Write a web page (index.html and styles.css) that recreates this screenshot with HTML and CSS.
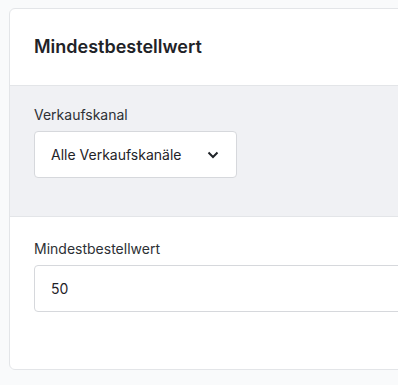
FILE: index.html
```html
<!DOCTYPE html>
<html lang="de">
<head>
  <meta charset="UTF-8">
  <meta name="viewport" content="width=device-width, initial-scale=1.0">
  <title>Mindestbestellwert</title>
  <link rel="stylesheet" href="styles.css">
</head>
<body>
  <div class="card">
    <div class="card-header">
      <h2>Mindestbestellwert</h2>
    </div>
    <div class="card-filter">
      <label for="channel">Verkaufskanal</label>
      <div class="select-box" id="channel">
        <span>Alle Verkaufskanäle</span>
        <svg width="12" height="8" viewBox="0 0 12 8"><path d="M1.5 1.5 L6 6 L10.5 1.5" fill="none" stroke="#1f2328" stroke-width="2"/></svg>
      </div>
    </div>
    <div class="card-body">
      <label for="minvalue">Mindestbestellwert</label>
      <input type="text" id="minvalue" value="50">
    </div>
  </div>
</body>
</html>
```

FILE: styles.css
```css
body {
  font-family: Inter, "Noto Sans", sans-serif;
  background-color: #f9fafb;
  margin: 0;
  padding: 8px 0 0 9px;
  overflow: hidden;
  color: #2d3035;
}
.card {
  width: 520px;
  background: white;
  border: 1px solid #e3e5e8;
  border-radius: 6px;
}
.card-header {
  padding: 26px 24px;
  border-bottom: 1px solid #e3e5e8;
}
.card-header h2 {
  margin: 0;
  font-size: 18px;
  line-height: 24px;
  font-weight: 600;
  color: #1f2328;
}
.card-filter {
  background: #f0f1f4;
  padding: 19px 24px 38px;
  border-bottom: 1px solid #e3e5e8;
}
label {
  display: block;
  font-size: 14px;
  line-height: 20px;
  margin-bottom: 6px;
  color: #2d3035;
}
.select-box {
  width: 203px;
  height: 47px;
  box-sizing: border-box;
  background: white;
  border: 1px solid #d6d8dc;
  border-radius: 4px;
  display: flex;
  align-items: center;
  justify-content: space-between;
  padding: 0 17px 0 16px;
  font-size: 14px;
  color: #1f2328;
}
.card-body {
  padding: 22px 24px 57px;
}
.card-body input {
  display: block;
  width: 100%;
  height: 47px;
  box-sizing: border-box;
  border: 1px solid #d6d8dc;
  border-radius: 4px;
  padding: 0 16px;
  font-family: inherit;
  font-size: 14px;
  color: #1f2328;
  background: white;
}
```
